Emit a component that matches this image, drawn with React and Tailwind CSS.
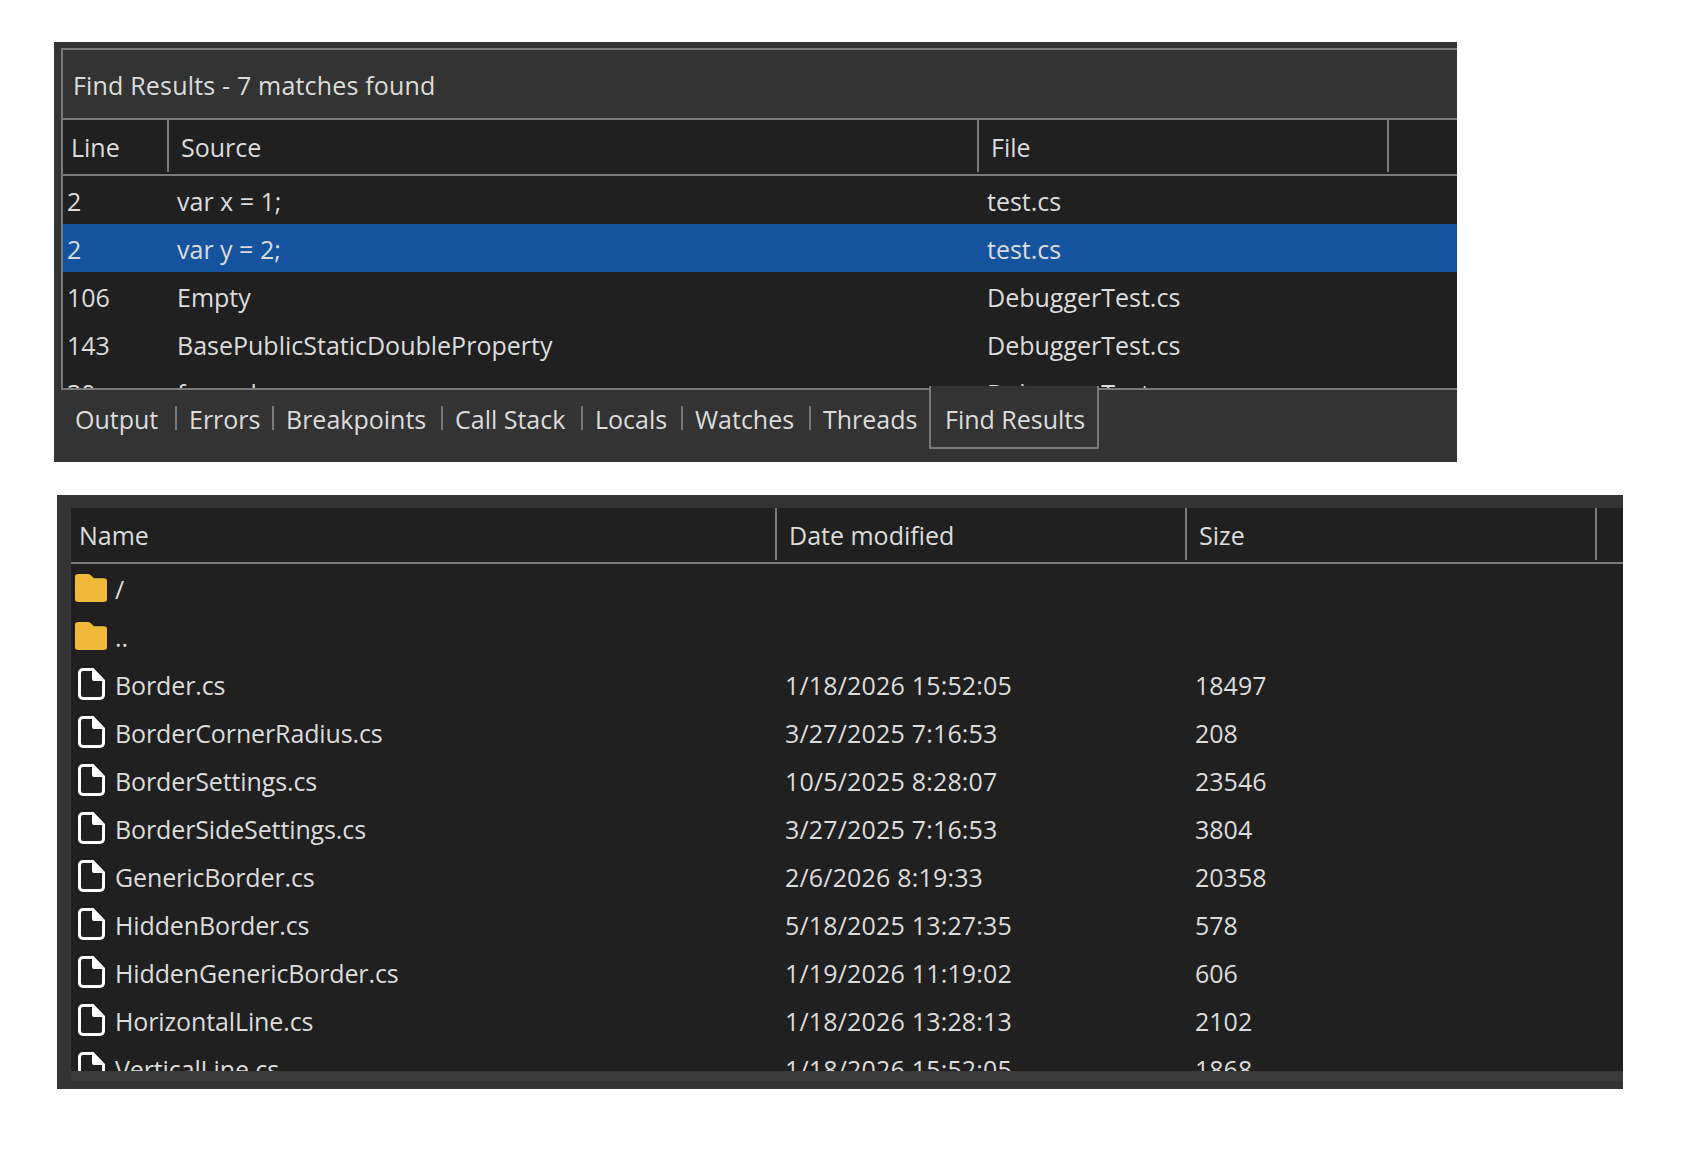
const font = "font-['Open_Sans','Noto_Sans',sans-serif]"

const findRows = [
	{ line: '2', source: 'var x = 1;', file: 'test.cs' },
	{ line: '2', source: 'var y = 2;', file: 'test.cs', selected: true },
	{ line: '106', source: 'Empty', file: 'DebuggerTest.cs' },
	{ line: '143', source: 'BasePublicStaticDoubleProperty', file: 'DebuggerTest.cs' },
	{ line: '30', source: 'foreach', file: 'DebuggerTest.cs' },
]

const tabs = [
	{ label: 'Output', width: 'w-[114px]' },
	{ label: 'Errors', width: 'w-[97px]' },
	{ label: 'Breakpoints', width: 'w-[169px]' },
	{ label: 'Call Stack', width: 'w-[140px]' },
	{ label: 'Locals', width: 'w-[100px]' },
	{ label: 'Watches', width: 'w-[128px]' },
]

const files = [
	{ name: '/', folder: true },
	{ name: '..', folder: true },
	{ name: 'Border.cs', date: '1/18/2026 15:52:05', size: '18497' },
	{ name: 'BorderCornerRadius.cs', date: '3/27/2025 7:16:53', size: '208' },
	{ name: 'BorderSettings.cs', date: '10/5/2025 8:28:07', size: '23546' },
	{ name: 'BorderSideSettings.cs', date: '3/27/2025 7:16:53', size: '3804' },
	{ name: 'GenericBorder.cs', date: '2/6/2026 8:19:33', size: '20358' },
	{ name: 'HiddenBorder.cs', date: '5/18/2025 13:27:35', size: '578' },
	{ name: 'HiddenGenericBorder.cs', date: '1/19/2026 11:19:02', size: '606' },
	{ name: 'HorizontalLine.cs', date: '1/18/2026 13:28:13', size: '2102' },
	{ name: 'VerticalLine.cs', date: '1/18/2026 15:52:05', size: '1868' },
]

const FolderGlyph = () => (
	<svg width="32" height="28" viewBox="0 0 32 28" className="shrink-0">
		<path d="M3 0h10c1 0 1.8.4 2.4 1L19 4.3h10a3 3 0 0 1 3 3V25a3 3 0 0 1-3 3H3a3 3 0 0 1-3-3V3a3 3 0 0 1 3-3z" fill="#f0b93a" />
	</svg>
)

const FileGlyph = () => (
	<svg width="27" height="32" viewBox="0 0 27 32" className="shrink-0">
		<path
			fillRule="evenodd"
			d="M5 0H15.5L27 12V27a5 5 0 0 1-5 5H5a5 5 0 0 1-5-5V5a5 5 0 0 1 5-5zM5 3a2 2 0 0 0-2 2V27a2 2 0 0 0 2 2H22a2 2 0 0 0 2-2V13H16a2 2 0 0 1-2-2V3z"
			fill="#ffffff"
		/>
	</svg>
)

const FindResults = () => (
	<div className="flex h-[420px] w-[1403px] flex-col bg-[#333333] pt-[6px] pl-[7px]">
		<div className="border-t-2 border-b-2 border-l-2 border-[#7a7a7a]">
			<div className="flex h-[70px] items-center border-b-2 border-[#7a7a7a] pl-[10px] pt-[4px] tracking-[0.18px]">Find Results - 7 matches found</div>
			<div className="flex h-[56px] border-b-2 border-[#7a7a7a] bg-[#202020]">
				<div className="flex h-[52px] w-[106px] items-center border-r-2 border-[#7a7a7a] pl-[8px] pt-[4px]">Line</div>
				<div className="flex h-[52px] w-[810px] items-center border-r-2 border-[#7a7a7a] pl-[12px] pt-[4px]">Source</div>
				<div className="flex h-[52px] w-[410px] items-center border-r-2 border-[#7a7a7a] pl-[12px] pt-[4px]">File</div>
			</div>
			<div className="h-[212px] overflow-hidden bg-[#202020]">
				{findRows.map((row, i) => (
					<div key={i} className={`flex h-[48px] items-center pt-[4px] ${row.selected ? 'bg-[#15539e]' : ''}`}>
						<span className="w-[114px] pl-[4px]">{row.line}</span>
						<span className="w-[810px]">{row.source}</span>
						<span>{row.file}</span>
					</div>
				))}
			</div>
		</div>
		<div className="flex h-[72px] items-start pl-[2px]">
			{tabs.map((tab) => (
				<div key={tab.label} className={`mt-[16px] flex h-[24px] items-center border-r-2 border-[#7a7a7a] pl-[12px] pt-[4px] ${tab.width}`}>{tab.label}</div>
			))}
			<div className="mt-[16px] flex h-[24px] w-[118px] items-center pl-[12px] pt-[4px]">Threads</div>
			<div className="relative z-10 -mt-[4px] flex h-[63px] w-[170px] items-center border-x-2 border-b-2 border-[#7a7a7a] bg-[#333333] pl-[14px] pt-[6px]">Find Results</div>
		</div>
	</div>
)

const FileList = () => (
	<div className="ml-[3px] mt-[33px] flex h-[594px] w-[1566px] flex-col bg-[#333333] pt-[13px] pl-[14px]">
		<div className="flex h-[56px] border-b-2 border-[#7a7a7a] bg-[#202020]">
			<div className="flex h-[52px] w-[706px] items-center border-r-2 border-[#7a7a7a] pl-[8px] pt-[4px]">Name</div>
			<div className="flex h-[52px] w-[410px] items-center border-r-2 border-[#7a7a7a] pl-[12px] pt-[4px]">Date modified</div>
			<div className="flex h-[52px] w-[410px] items-center border-r-2 border-[#7a7a7a] pl-[12px] pt-[4px]">Size</div>
		</div>
		<div className="h-[507px] overflow-hidden bg-[#202020]">
			{files.map((file) => (
				<div key={file.name} className="flex h-[48px] items-center">
					<div className="flex w-[714px] items-center">
						<span className="flex w-[44px] justify-start pl-[4px]">
							{file.folder ? <FolderGlyph /> : <span className="pl-[3px]"><FileGlyph /></span>}
						</span>
						<span className="pt-[4px] tracking-[-0.12px]">{file.name}</span>
					</div>
					<span className="w-[410px] pt-[4px] tracking-[0.18px]">{file.date}</span>
					<span className="pt-[4px]">{file.size}</span>
				</div>
			))}
		</div>
		<div className="h-[10px] bg-[#3a3a3a]" />
	</div>
)

export default function App() {
	return (
		<div className={`min-h-[1150px] bg-white pt-[42px] pl-[54px] text-[25px] text-[#dcdcdc] ${font}`}>
			<FindResults />
			<FileList />
		</div>
	)
}
